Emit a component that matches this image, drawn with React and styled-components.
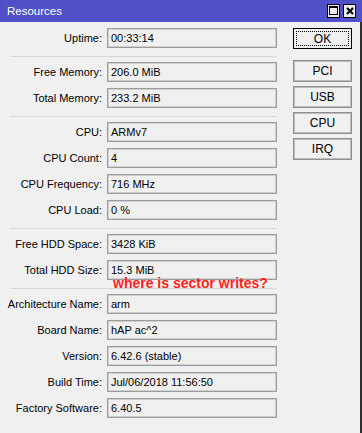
import styled, { createGlobalStyle } from "styled-components";

const GlobalStyle = createGlobalStyle`
    html, body {
        margin: 0;
        padding: 0;
        background: #f0f0f0;
    }
    body {
        font-family: "Liberation Sans", Arial, sans-serif;
        font-size: 11px;
        color: #000;
    }
`

const Window = styled.div`
    width: 362px;
    min-height: 433px;
    display: flex;
    flex-direction: column;
    background: #f0f0f0;
    overflow: hidden;
`

const TitleBar = styled.div`
    height: 22px;
    background: #5050c8;
    display: flex;
    align-items: center;
    justify-content: space-between;
    padding: 0 6px 0 7px;
    color: #fff;
    font-size: 11.5px;
`

const TitleButtons = styled.div`
    display: flex;
    gap: 3px;
    margin-top: -1px;
`

const TitleButton = styled.div`
    width: 13px;
    height: 14px;
    box-sizing: border-box;
    border: 1px solid #000;
    background: #ececec;
    display: flex;
    align-items: center;
    justify-content: center;
`

const Body = styled.div`
    flex: 1;
    position: relative;
    display: flex;
    padding-top: 6px;
    border-right: 2px solid #303030;
`

const Fields = styled.div`
    width: 277px;
    display: flex;
    flex-direction: column;
`

const Row = styled.div`
    display: grid;
    grid-template-columns: 102px 170px;
    column-gap: 5px;
    align-items: center;
    height: 20px;
    margin-bottom: 6px;
`

const Label = styled.div`
    text-align: right;
    white-space: nowrap;
`

const Value = styled.div`
    height: 20px;
    box-sizing: border-box;
    border: 1px solid #9c9c9c;
    box-shadow: inset 0 0 0 1px #d0d0d0;
    padding-left: 3px;
    line-height: 18px;
    white-space: nowrap;
`

const Separator = styled.div`
    height: 1px;
    background: #d6d6d6;
    margin: 2px 0 5px 10px;
`

const Side = styled.div`
    margin-left: 16px;
    width: 59px;
    display: flex;
    flex-direction: column;
    gap: 4px;
`

const Button = styled.div`
    height: ${(props) => (props.primary ? "21px" : "22px")};
    margin-bottom: ${(props) => (props.primary ? "7px" : "0")};
    box-sizing: border-box;
    border: 1px solid ${(props) => (props.primary ? "#000" : "#8e8e8e")};
    box-shadow: ${(props) => (props.primary ? "none" : "inset 0 0 0 1px #bcbcbc")};
    position: relative;
    display: flex;
    align-items: center;
    justify-content: center;
    font-size: 12px;
    &::after{
        content: "";
        display: ${(props) => (props.primary ? "block" : "none")};
        position: absolute;
        inset: 2px;
        border: 1px dotted #000;
    }
`

const Note = styled.div`
    position: absolute;
    left: 113px;
    top: 253px;
    font-size: 14px;
    font-weight: bold;
    color: #ff1f1f;
    white-space: nowrap;
`

const groups = [
    [["Uptime", "00:33:14"]],
    [["Free Memory", "206.0 MiB"], ["Total Memory", "233.2 MiB"]],
    [["CPU", "ARMv7"], ["CPU Count", "4"], ["CPU Frequency", "716 MHz"], ["CPU Load", "0 %"]],
    [["Free HDD Space", "3428 KiB"], ["Total HDD Size", "15.3 MiB"]],
    [["Architecture Name", "arm"], ["Board Name", "hAP ac^2"], ["Version", "6.42.6 (stable)"], ["Build Time", "Jul/06/2018 11:56:50"], ["Factory Software", "6.40.5"]],
];

function App() {
    return (
        <>
            <GlobalStyle />
            <Window>
                <TitleBar>
                    <span>Resources</span>
                    <TitleButtons>
                        <TitleButton>
                            <svg width="9" height="9" viewBox="0 0 9 9">
                                <rect x="0.5" y="0.5" width="8" height="8" fill="none" stroke="#000" />
                                <rect x="0" y="0" width="9" height="2" fill="#000" />
                            </svg>
                        </TitleButton>
                        <TitleButton>
                            <svg width="8" height="8" viewBox="0 0 8 8">
                                <path d="M1 1 L7 7 M7 1 L1 7" stroke="#000" strokeWidth="2" />
                            </svg>
                        </TitleButton>
                    </TitleButtons>
                </TitleBar>
                <Body>
                    <Fields>
                        {groups.map((group, i) => (
                            <div key={i}>
                                {i > 0 && <Separator />}
                                {group.map(([label, value]) => (
                                    <Row key={label}>
                                        <Label>{label}:</Label>
                                        <Value>{value}</Value>
                                    </Row>
                                ))}
                            </div>
                        ))}
                    </Fields>
                    <Side>
                        <Button primary>OK</Button>
                        <Button>PCI</Button>
                        <Button>USB</Button>
                        <Button>CPU</Button>
                        <Button>IRQ</Button>
                    </Side>
                    <Note>where is sector writes?</Note>
                </Body>
            </Window>
        </>
    );
}

export default App;
